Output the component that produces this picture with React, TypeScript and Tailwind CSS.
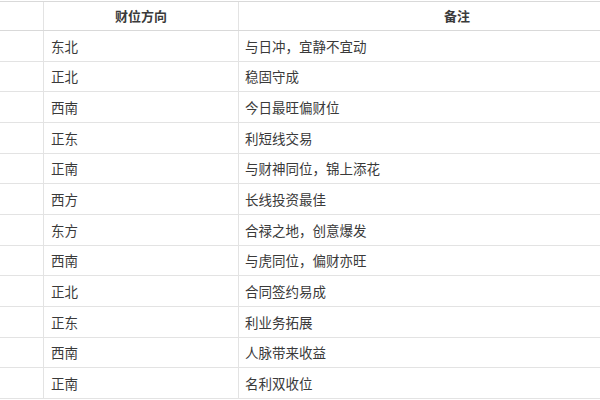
import React from "react";

const rows: [string, string][] = [
  ["东北", "与日冲，宜静不宜动"],
  ["正北", "稳固守成"],
  ["西南", "今日最旺偏财位"],
  ["正东", "利短线交易"],
  ["正南", "与财神同位，锦上添花"],
  ["西方", "长线投资最佳"],
  ["东方", "合禄之地，创意爆发"],
  ["西南", "与虎同位，偏财亦旺"],
  ["正北", "合同签约易成"],
  ["正东", "利业务拓展"],
  ["西南", "人脉带来收益"],
  ["正南", "名利双收位"],
];

export default function App() {
  return (
    <div
      className="w-[600px] h-[400px] overflow-hidden bg-white text-[#3a3a3a]"
      style={{ fontFamily: '"Noto Sans CJK SC", "Noto Sans", sans-serif' }}
    >
      <div className="ml-[-100px] w-[775px] pt-px">
        <div className="flex h-[30px] border-t border-b border-[#d9d9d9] text-[13px] font-bold">
          <div className="w-[144px] border-r border-[#e3e3e3]"></div>
          <div className="w-[195px] border-r border-[#e3e3e3] flex items-center justify-center">
            财位方向
          </div>
          <div className="w-[436px] flex items-center justify-center">备注</div>
        </div>
        {rows.map(([d, n], i) => (
          <div
            key={i}
            className="flex h-[30.67px] border-b border-[#e3e3e3] text-[13.5px]"
          >
            <div className="w-[144px] border-r border-[#e3e3e3]"></div>
            <div className="w-[195px] border-r border-[#e3e3e3] flex items-center pl-[7px]">
              {d}
            </div>
            <div className="w-[436px] flex items-center pl-[6px]">{n}</div>
          </div>
        ))}
      </div>
    </div>
  );
}
